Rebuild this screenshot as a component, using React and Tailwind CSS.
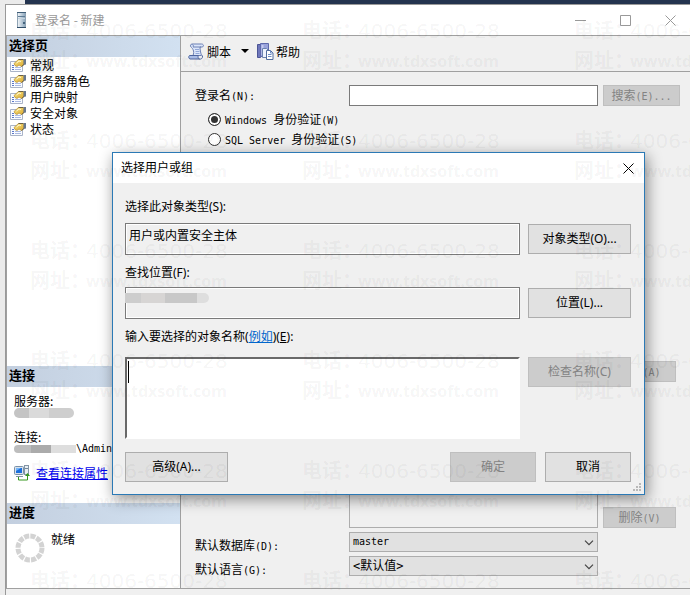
import { useState } from "react";

const pages = ["常规", "服务器角色", "用户映射", "安全对象", "状态"];

// Latin runs are set in a fixed-width face, half as wide as a CJK glyph
function Song({ children }) {
  return children.split(/([\x20-\x7e]+)/).map((part, i) =>
    i % 2 ? (
      <span key={i} className="whitespace-pre font-['DejaVu_Sans_Mono',monospace] text-[10px]">{part}</span>
    ) : (
      part
    )
  );
}

function ServerIcon() {
  return (
    <svg width="10" height="17" viewBox="0 0 10 17">
      <defs>
        <linearGradient id="server" x1="0" x2="1">
          <stop offset="0" stopColor="#f4f8fb" />
          <stop offset="1" stopColor="#87a2b8" />
        </linearGradient>
      </defs>
      <rect x="0.5" y="0.5" width="8" height="15" fill="url(#server)" stroke="#8fa3b4" />
      <path d="M0 .5h9" stroke="#405e78" />
      <path d="M1 4.500h7" stroke="#5e7b94" />
      <path d="M1 6.500h7" stroke="#c5d3de" />
      <rect x="6" y="10" width="2" height="2" fill="#45647e" />
      <path d="M0 15.500h9" stroke="#2f4d68" />
    </svg>
  );
}

function PageIcon() {
  return (
    <svg width="17" height="15" viewBox="0 0 17 15">
      <defs>
        <linearGradient id="hand" x1="0" y1="0" x2="1" y2="1">
          <stop offset="0" stopColor="#fbe88c" />
          <stop offset="1" stopColor="#d9a62a" />
        </linearGradient>
      </defs>
      <path d="M.5 3.500h12v10H.5z" fill="#fafcff" stroke="#aab4c8" />
      <path d="M2 7.500h2M2 9.500h2M2 11.500h2" stroke="#5b78c8" />
      <path d="M5 9.500h6M5 11.500h6" stroke="#a9b9e2" />
      <path d="M4 5.500L8.500 1.500H14V6.500L11.500 8.500 9 7 7 8.500 5 7.500z" fill="url(#hand)" stroke="#b58e30" strokeWidth=".7" />
      <path d="M8.500 1.500H13" stroke="#6b6046" />
      <path d="M6.500 5L9 3l2 .5" stroke="#fffbd8" fill="none" />
      <path d="M13.500 1H16v5.500l-2.500.5z" fill="#68788e" />
      <path d="M11.500 8.500L14 6.500" stroke="#6b6046" />
    </svg>
  );
}

function ScriptIcon() {
  return (
    <svg width="17" height="17" viewBox="0 0 17 17">
      <path d="M4 1h9.500c2.500 0 2.500 3 .5 3h-2c0 3 .5 5 1.500 8.500H5c.8-2 1-4 0-6C4.300 5 3.500 4.500 3 4 2 3 2.500 1 4 1z" fill="#dce6fa" stroke="#6c80b4" />
      <path d="M1.500 12.500h9c-.8 1-.5 3 .8 3.500H2C.5 15.500.3 13.500 1.500 12.500z" fill="#a9bce6" stroke="#4f659d" />
      <path d="M11 16c2 .5 4-.5 3.500-3.500" fill="none" stroke="#4f659d" />
      <path d="M4.500 1.500c1 .5 1 2 .5 2.500h8" fill="none" stroke="#6c80b4" />
      <path d="M7 6.500h4M7.500 8.500h4M7.500 10.500h4" stroke="#93a8d8" />
    </svg>
  );
}

function HelpIcon() {
  return (
    <svg width="17" height="17" viewBox="0 0 17 17">
      <path d="M.5 1.500h3v13h-3z" fill="#6f77bb" stroke="#4c5596" />
      <path d="M3.500 .5h8v13h-8z" fill="#9aa3db" stroke="#5f69ab" />
      <path d="M4.500 2h2v10h-2z" fill="#c6cbf0" />
      <path d="M5.500 5.500h4l2 2v7h-6z" fill="#eef3fd" stroke="#6b82ae" />
      <path d="M9.500 7.500h4l2.500 2.500v6.500H9.500z" fill="#fff" stroke="#526d9d" />
      <path d="M13.500 7.500V10H16M11 11.500h3.500M11 13.500h3.500" fill="none" stroke="#6d8cc5" />
    </svg>
  );
}

function ConnectionIcon() {
  return (
    <svg width="16" height="16" viewBox="0 0 16 16">
      <rect x=".5" y="1.500" width="9" height="8" rx="1" fill="#d9e2ec" stroke="#7890a8" />
      <rect x="2" y="3" width="6" height="5" fill="#1c6fdd" />
      <path d="M2 3h5L2 6z" fill="#74b5fa" />
      <path d="M2 11.500h7" stroke="#8092a5" />
      <rect x="10.500" y=".5" width="4" height="9" fill="#e8eef3" stroke="#8495a5" />
      <path d="M11 3.500h3" stroke="#73889b" />
      <path d="M4.500 12v3h9V9" fill="none" stroke="#36971e" />
      <path d="M11 11l2.500-3 2.500 3z" fill="#36971e" />
    </svg>
  );
}

function Spinner() {
  return (
    <svg width="30" height="30" viewBox="0 0 30 30">
      <circle cx="15" cy="15" r="12" fill="none" stroke="#d3d3d3" strokeWidth="5" strokeDasharray="5.100 1.183" />
    </svg>
  );
}

function CloseIcon() {
  return (
    <svg width="11" height="11" viewBox="0 0 11 11" stroke="currentColor">
      <path d="M.5 .5l10 10M10.500 .5l-10 10" />
    </svg>
  );
}

function PaneHeader({ children }) {
  return (
    <h2 className="h-[21px] bg-linear-to-r from-[#c3cfdf] to-[#d2e1f1] px-0.5 text-[13px] leading-[17px] font-bold">
      {children}
    </h2>
  );
}

function Dropdown({ id, value, className }) {
  return (
    <div className="relative flex-1">
      <select
        id={id}
        defaultValue={value}
        className={`block h-5 w-full appearance-none border border-[#adadad] bg-[#e1e1e1] px-[3px] font-['DejaVu_Sans_Mono','Noto_Sans_CJK_SC',monospace] ${className}`}
      >
        <option>{value}</option>
      </select>
      <svg className="pointer-events-none absolute top-2 right-1" width="10" height="6" viewBox="0 0 10 6" fill="none" stroke="#444" strokeWidth="1.200">
        <path d="M1 .7l4 4 4-4" />
      </svg>
    </div>
  );
}

function DialogButton({ className = "", ...props }) {
  return (
    <button
      type="button"
      className={`h-[30px] border border-[#adadad] bg-[#e1e1e1] disabled:border-[#bfbfbf] disabled:bg-[#cccccc] disabled:text-[#838383] ${className}`}
      {...props}
    />
  );
}

function SelectUserDialog() {
  const [names, setNames] = useState("");

  return (
    <section
      role="dialog"
      aria-label="选择用户或组"
      className="absolute top-[152px] left-[112px] w-[533px] border border-[#2b79b5] bg-[#f0f0f0] font-['Noto_Sans','Noto_Sans_CJK_SC',sans-serif] shadow-[2px_4px_14px_rgba(0,0,0,0.45)]"
    >
      <header className="flex h-[30px] items-center justify-between bg-white pr-2.5 pl-2">
        <h1>选择用户或组</h1>
        <button type="button" aria-label="关闭"><CloseIcon /></button>
      </header>
      <div className="pt-3.5 pr-[13px] pb-3 pl-3">
        <label htmlFor="object-type" className="block h-5 leading-5">选择此对象类型(S):</label>
        <div className="mt-1.5 flex items-center gap-2">
          <input
            id="object-type"
            readOnly
            value="用户或内置安全主体"
            className="h-8 min-w-0 flex-1 border border-[#7a7a7a] px-[3px] pb-2 shadow-[inset_0_0_0_1px_white]"
          />
          <DialogButton className="w-[103px]">对象类型(O)...</DialogButton>
        </div>
        <label htmlFor="location" className="mt-2 block h-5 leading-5">查找位置(F):</label>
        <div className="mt-1 flex items-center gap-2">
          <div className="relative flex-1">
            <input id="location" readOnly className="block h-8 w-full border border-[#7a7a7a] shadow-[inset_0_0_0_1px_white]" />
            <div className="absolute top-1.5 left-0 flex h-2.5 w-[84px] overflow-hidden rounded-r-full">
              <i className="w-4 bg-[#cdcdcd]" />
              <i className="w-6 bg-[#d7d5d4]" />
              <i className="w-8 bg-[#c8c8c8]" />
              <i className="flex-1 bg-[#dedede]" />
            </div>
          </div>
          <DialogButton className="w-[103px]">位置(L)...</DialogButton>
        </div>
        <div className="mt-2 h-5 leading-5">
          <label htmlFor="object-names">输入要选择的对象名称</label>(
          <a href="#examples" className="text-[#0066cc] underline">例如</a>)(<u>E</u>):
        </div>
        <div className="mt-2.5 flex items-start gap-2">
          <div className="relative flex-1">
            <textarea
              id="object-names"
              value={names}
              onChange={(e) => setNames(e.target.value)}
              className="block h-[82px] w-full resize-none border-2 border-t-[#696969] border-r-white border-b-white border-l-[#696969] bg-white px-1 outline-none"
            />
            {!names && <span className="absolute top-1 left-[3px] h-[22px] w-px bg-black" />}
          </div>
          <DialogButton disabled className="w-[103px]">检查名称(C)</DialogButton>
        </div>
        <div className="mt-[13px] flex gap-[9px]">
          <DialogButton className="mr-auto w-[103px]">高级(A)...</DialogButton>
          <DialogButton disabled className="w-[86px]">确定</DialogButton>
          <DialogButton className="w-[86px]">取消</DialogButton>
        </div>
      </div>
      <svg className="absolute right-0.5 bottom-0.5" width="9" height="9" viewBox="0 0 9 9" fill="#b8b8b8">
        <path d="M6 0h2v2H6zM3 3h2v2H3zM6 3h2v2H6zM0 6h2v2H0zM3 6h2v2H3zM6 6h2v2H6z" />
      </svg>
    </section>
  );
}

function Watermark() {
  return (
    <div aria-hidden="true" className="pointer-events-none absolute inset-0 overflow-hidden text-black/5">
      <div className="grid w-max auto-rows-[110px] grid-cols-[repeat(3,272px)] pt-4 pl-[30px] font-['DejaVu_Sans','Noto_Sans_CJK_SC',sans-serif] text-xl leading-[30px] whitespace-nowrap">
        {Array.from({ length: 18 }, (_, i) => (
          <div key={i}>
            <p className="flex h-[30px]"><b className="w-14 shrink-0">电话：</b>4006-6500-28</p>
            <p className="flex h-[30px]">
              <b className="w-14 shrink-0">网址：</b>
              <span className="font-['Noto_Sans',sans-serif] text-base leading-[30px] font-bold">www.tdxsoft.com</span>
            </p>
          </div>
        ))}
      </div>
    </div>
  );
}

export default function App() {
  const [auth, setAuth] = useState("windows");

  return (
    <div className="relative flex min-h-screen flex-col overflow-hidden bg-[#ebebeb] font-['Noto_Sans_CJK_SC',sans-serif] text-xs text-black">
      <div className="ml-[25px] h-1 bg-[#24344f]" />
      <div className="ml-[5px] flex flex-1 flex-col border-t border-l border-[#999] bg-[#f0f0f0]">
        {/* Title bar */}
        <header className="flex h-[31px] items-center border-b border-[#a0a0a0] bg-white pr-3.5 pl-[11px] text-[#999]">
          <ServerIcon />
          <h1 className="ml-2 flex-1">登录名 - 新建</h1>
          <div className="flex gap-[34px]">
            <button type="button" aria-label="最小化">
              <svg width="11" height="11" viewBox="0 0 11 11" stroke="currentColor"><path d="M0 5.500h11" /></svg>
            </button>
            <button type="button" aria-label="最大化">
              <svg width="11" height="11" viewBox="0 0 11 11" fill="none" stroke="currentColor"><path d="M.5 .5h10v10H.5z" /></svg>
            </button>
            <button type="button" aria-label="关闭"><CloseIcon /></button>
          </div>
        </header>

        <div className="flex flex-1">
          {/* Sidebar */}
          <aside className="flex w-[175px] shrink-0 flex-col border-r border-l border-[#a0a0a0] bg-white">
            <PaneHeader>选择页</PaneHeader>
            <nav className="flex-1">
              {pages.map((page) => (
                <a key={page} href="#page" className="flex h-4 items-center gap-[3px] pl-[3px] leading-4">
                  <PageIcon />
                  <span className={page === "常规" ? "bg-[#f0f0f0]" : ""}>{page}</span>
                </a>
              ))}
            </nav>

            <PaneHeader>连接</PaneHeader>
            <div className="px-[7px] pt-2 pb-[22px] leading-3">
              <p>服务器:</p>
              <div className="flex h-3 items-center">
                <i className="h-2.5 w-[15px] rounded-l-full bg-[#c4c4c4]" />
                <i className="h-2.5 w-5 bg-[#dadada]" />
                <i className="h-2.5 w-[25px] rounded-r-full bg-[#cecece]" />
              </div>
              <p className="mt-3">连接:</p>
              <div className="flex h-3 items-center">
                <i className="h-2 w-[17px] rounded-l-full bg-[#bdbdbd]" />
                <i className="h-2 w-5 bg-[#ababab]" />
                <i className="h-2 w-[25px] bg-[#dedede]" />
                <Song>\Admin</Song>
              </div>
              <a href="#connection" className="mt-2.5 flex h-4 items-center gap-1.5 text-[#0000ee] underline">
                <ConnectionIcon />
                查看连接属性
              </a>
            </div>

            <PaneHeader>进度</PaneHeader>
            <div className="flex gap-1.5 px-2 pt-[9px] pb-[25px] leading-3">
              <Spinner />
              <p>就绪</p>
            </div>
          </aside>

          <main className="flex min-w-0 flex-1 flex-col">
            {/* Toolbar */}
            <div className="flex h-9 items-center border-b border-[#a0a0a0] pb-1 pl-[7px]">
              <button type="button" className="flex items-center gap-0.5">
                <ScriptIcon />
                脚本
                <svg className="ml-2" width="8" height="5" viewBox="0 0 8 5"><path d="M0 0h8L4 4z" /></svg>
              </button>
              <button type="button" className="ml-2 flex items-center gap-0.5">
                <HelpIcon />
                帮助
              </button>
            </div>

            <form className="flex flex-1 flex-col pt-[13px] pr-2.5 pb-3 pl-3.5">
              <div className="flex items-center">
                <label htmlFor="login" className="w-[154px]"><Song>登录名(N):</Song></label>
                <input id="login" className="h-[21px] min-w-0 flex-1 border border-[#7a7a7a] bg-white px-1" />
                <button type="button" disabled className="ml-[5px] h-[21px] w-[77px] border border-[#bfbfbf] bg-[#ccc] leading-4 text-[#838383]">
                  <Song>搜索(E)...</Song>
                </button>
              </div>
              <div className="mt-[3px] pl-[13px]">
                {[["windows", "Windows 身份验证(W)"], ["sql", "SQL Server 身份验证(S)"]].map(([value, label]) => (
                  <label key={value} className="flex h-5 items-center gap-1">
                    <input
                      type="radio"
                      name="auth"
                      checked={auth === value}
                      onChange={() => setAuth(value)}
                      className="size-[13px] appearance-none rounded-full border border-[#333] bg-white checked:bg-[#333] checked:shadow-[inset_0_0_0_2px_white]"
                    />
                    <span><Song>{label}</Song></span>
                  </label>
                ))}
              </div>

              <div className="mt-auto flex h-[167px] pl-[154px]">
                <div className="flex-1 border border-[#adadad]" />
                <div className="ml-[5px] flex w-[77px] flex-col items-start justify-between text-[#838383]">
                  <button type="button" disabled className="h-[21px] w-[73px] border border-[#bfbfbf] bg-[#ccc] leading-4"><Song>添加(A)</Song></button>
                  <button type="button" disabled className="h-[21px] w-[73px] border border-[#bfbfbf] bg-[#ccc] leading-4"><Song>删除(V)</Song></button>
                </div>
              </div>
              <div className="mt-1 flex items-center pr-[82px]">
                <label htmlFor="database" className="h-5 w-[154px] leading-[26px]"><Song>默认数据库(D):</Song></label>
                <Dropdown id="database" value="master" className="text-[10px]" />
              </div>
              <div className="mt-1 flex items-center pr-[82px]">
                <label htmlFor="language" className="h-5 w-[154px] leading-[26px]"><Song>默认语言(G):</Song></label>
                <Dropdown id="language" value="<默认值>" className="text-xs" />
              </div>
            </form>
          </main>
        </div>
        <footer className="h-[7px] border-t border-[#a0a0a0]" />
      </div>

      <SelectUserDialog />
      <Watermark />
    </div>
  );
}
